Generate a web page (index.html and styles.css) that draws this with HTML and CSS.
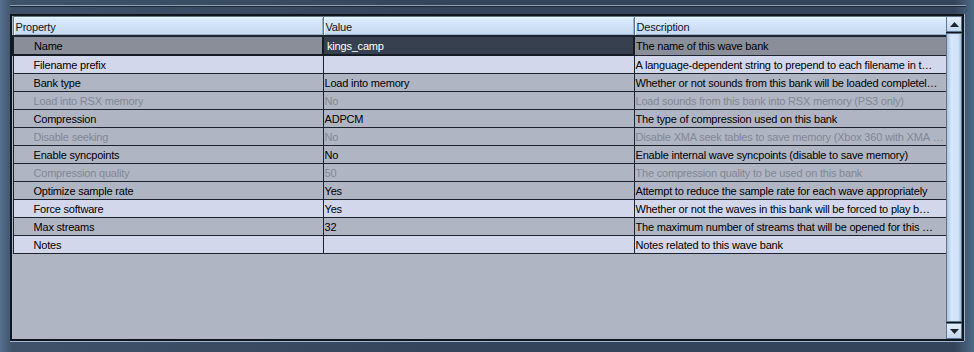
FILE: index.html
```html
<!DOCTYPE html>
<html lang="en">
  <head>
    <meta charset="UTF-8" />
    <title>Wave bank properties</title>
    <link rel="stylesheet" href="styles.css">
  </head>
  <body>
    <div class="topline"></div>
    <div class="frame">
      <div class="grid">
        <table class="props">
          <colgroup>
            <col class="col-prop" />
            <col class="col-value" />
            <col class="col-desc" />
          </colgroup>
          <thead>
            <tr>
              <th>Property</th>
              <th>Value</th>
              <th>Description</th>
            </tr>
          </thead>
          <tbody>
            <tr class="selected">
              <td class="name">Name</td>
              <td class="value">kings_camp</td>
              <td>The name of this wave bank</td>
            </tr>
            <tr class="light">
              <td class="name">Filename prefix</td>
              <td></td>
              <td>A language-dependent string to prepend to each filename in t…</td>
            </tr>
            <tr>
              <td class="name">Bank type</td>
              <td>Load into memory</td>
              <td>Whether or not sounds from this bank will be loaded completel…</td>
            </tr>
            <tr class="disabled">
              <td class="name">Load into RSX memory</td>
              <td>No</td>
              <td>Load sounds from this bank into RSX memory (PS3 only)</td>
            </tr>
            <tr>
              <td class="name">Compression</td>
              <td>ADPCM</td>
              <td>The type of compression used on this bank</td>
            </tr>
            <tr class="disabled">
              <td class="name">Disable seeking</td>
              <td>No</td>
              <td>Disable XMA seek tables to save memory (Xbox 360 with XMA&nbsp;…</td>
            </tr>
            <tr>
              <td class="name">Enable syncpoints</td>
              <td>No</td>
              <td>Enable internal wave syncpoints (disable to save memory)</td>
            </tr>
            <tr class="disabled">
              <td class="name">Compression quality</td>
              <td>50</td>
              <td>The compression quality to be used on this bank</td>
            </tr>
            <tr>
              <td class="name">Optimize sample rate</td>
              <td>Yes</td>
              <td>Attempt to reduce the sample rate for each wave appropriately</td>
            </tr>
            <tr class="light">
              <td class="name">Force software</td>
              <td>Yes</td>
              <td>Whether or not the waves in this bank will be forced to play b…</td>
            </tr>
            <tr>
              <td class="name">Max streams</td>
              <td>32</td>
              <td>The maximum number of streams that will be opened for this …</td>
            </tr>
            <tr class="light">
              <td class="name">Notes</td>
              <td></td>
              <td>Notes related to this wave bank</td>
            </tr>
          </tbody>
        </table>
      </div>
      <div class="scrollbar">
        <div class="scroll-btn">
          <svg width="9" height="5" viewBox="0 0 9 5"><path d="M4.5 0 L9 5 L0 5 Z" fill="#1c2633"/></svg>
        </div>
        <div class="scroll-track"></div>
        <div class="scroll-btn">
          <svg width="9" height="5" viewBox="0 0 9 5"><path d="M0 0 L9 0 L4.5 5 Z" fill="#1c2633"/></svg>
        </div>
      </div>
    </div>
  </body>
</html>
```

FILE: styles.css
```css
body {
  margin: 0;
  width: 974px;
  height: 352px;
  overflow: hidden;
  font-family: "Liberation Sans", Arial, sans-serif;
  font-size: 11px;
  letter-spacing: -0.2px;
  background: linear-gradient(to right, #56718f 0px, #3f5269 12px, #34445a 50%, #34445a 98%, #4e6a88 100%);
}

.topline {
  margin: 5px 8px 0 10px;
  height: 0;
  border-top: 1px solid #8ea3b9;
  border-bottom: 1px solid #1d2632;
}

.frame {
  display: flex;
  margin: 7px 10px 0 10px;
  height: 323px;
  border: 2px solid #10161e;
  background: #b0b5c4;
  box-shadow: 0 1px 0 #9fb6cf, 1px 0 0 #9fb6cf;
}

.grid {
  flex: 1;
  overflow: hidden;
}

.props {
  width: 935px;
  table-layout: fixed;
  border-collapse: collapse;
}

.col-prop {
  width: 310px;
}

.col-value {
  width: 311px;
}

.col-desc {
  width: 314px;
}

th {
  height: 17px;
  padding: 1px 2px 0;
  text-align: left;
  font-weight: normal;
  color: #10161e;
  background: linear-gradient(#dcecfd, #c3d8ef);
  border: 1px solid #5d7690;
  box-shadow: inset 1px 1px 0 #f2f8ff, inset -1px -1px 0 #9bb3cc;
  border-bottom: 2px solid #1c2430;
}

td {
  height: 16px;
  padding: 1px 0 0 1px;
  white-space: nowrap;
  overflow: hidden;
  text-overflow: ellipsis;
  color: #000;
  background: #b0b5c4;
  border: 1px solid #1c2430;
}

td.name {
  padding-left: 20px;
}

tr.light td {
  background: #d3d7ec;
}

tr.disabled td {
  color: #818897;
}

tr.selected td {
  background: #898e99;
  border: 2px solid #161c24;
}

tr.selected td:last-child {
  border: 1px solid #1c2430;
}

tr.selected td.value {
  background: #37404e;
  color: #fff;
  padding-left: 3px;
}

.scrollbar {
  width: 16px;
  display: flex;
  flex-direction: column;
  background: #10161e;
}

.scroll-btn {
  height: 16px;
  display: flex;
  align-items: center;
  justify-content: center;
  background: linear-gradient(#e3effc, #c2d6ee);
  border: 1px solid #5d7690;
  box-sizing: border-box;
}

.scroll-track {
  flex: 1;
  margin: 1px 0;
  background: linear-gradient(to right, #aac1da, #d5e7fb 30%, #cfe2f8 80%, #a7bfd8);
  border: 1px solid #5d7690;
}
```
